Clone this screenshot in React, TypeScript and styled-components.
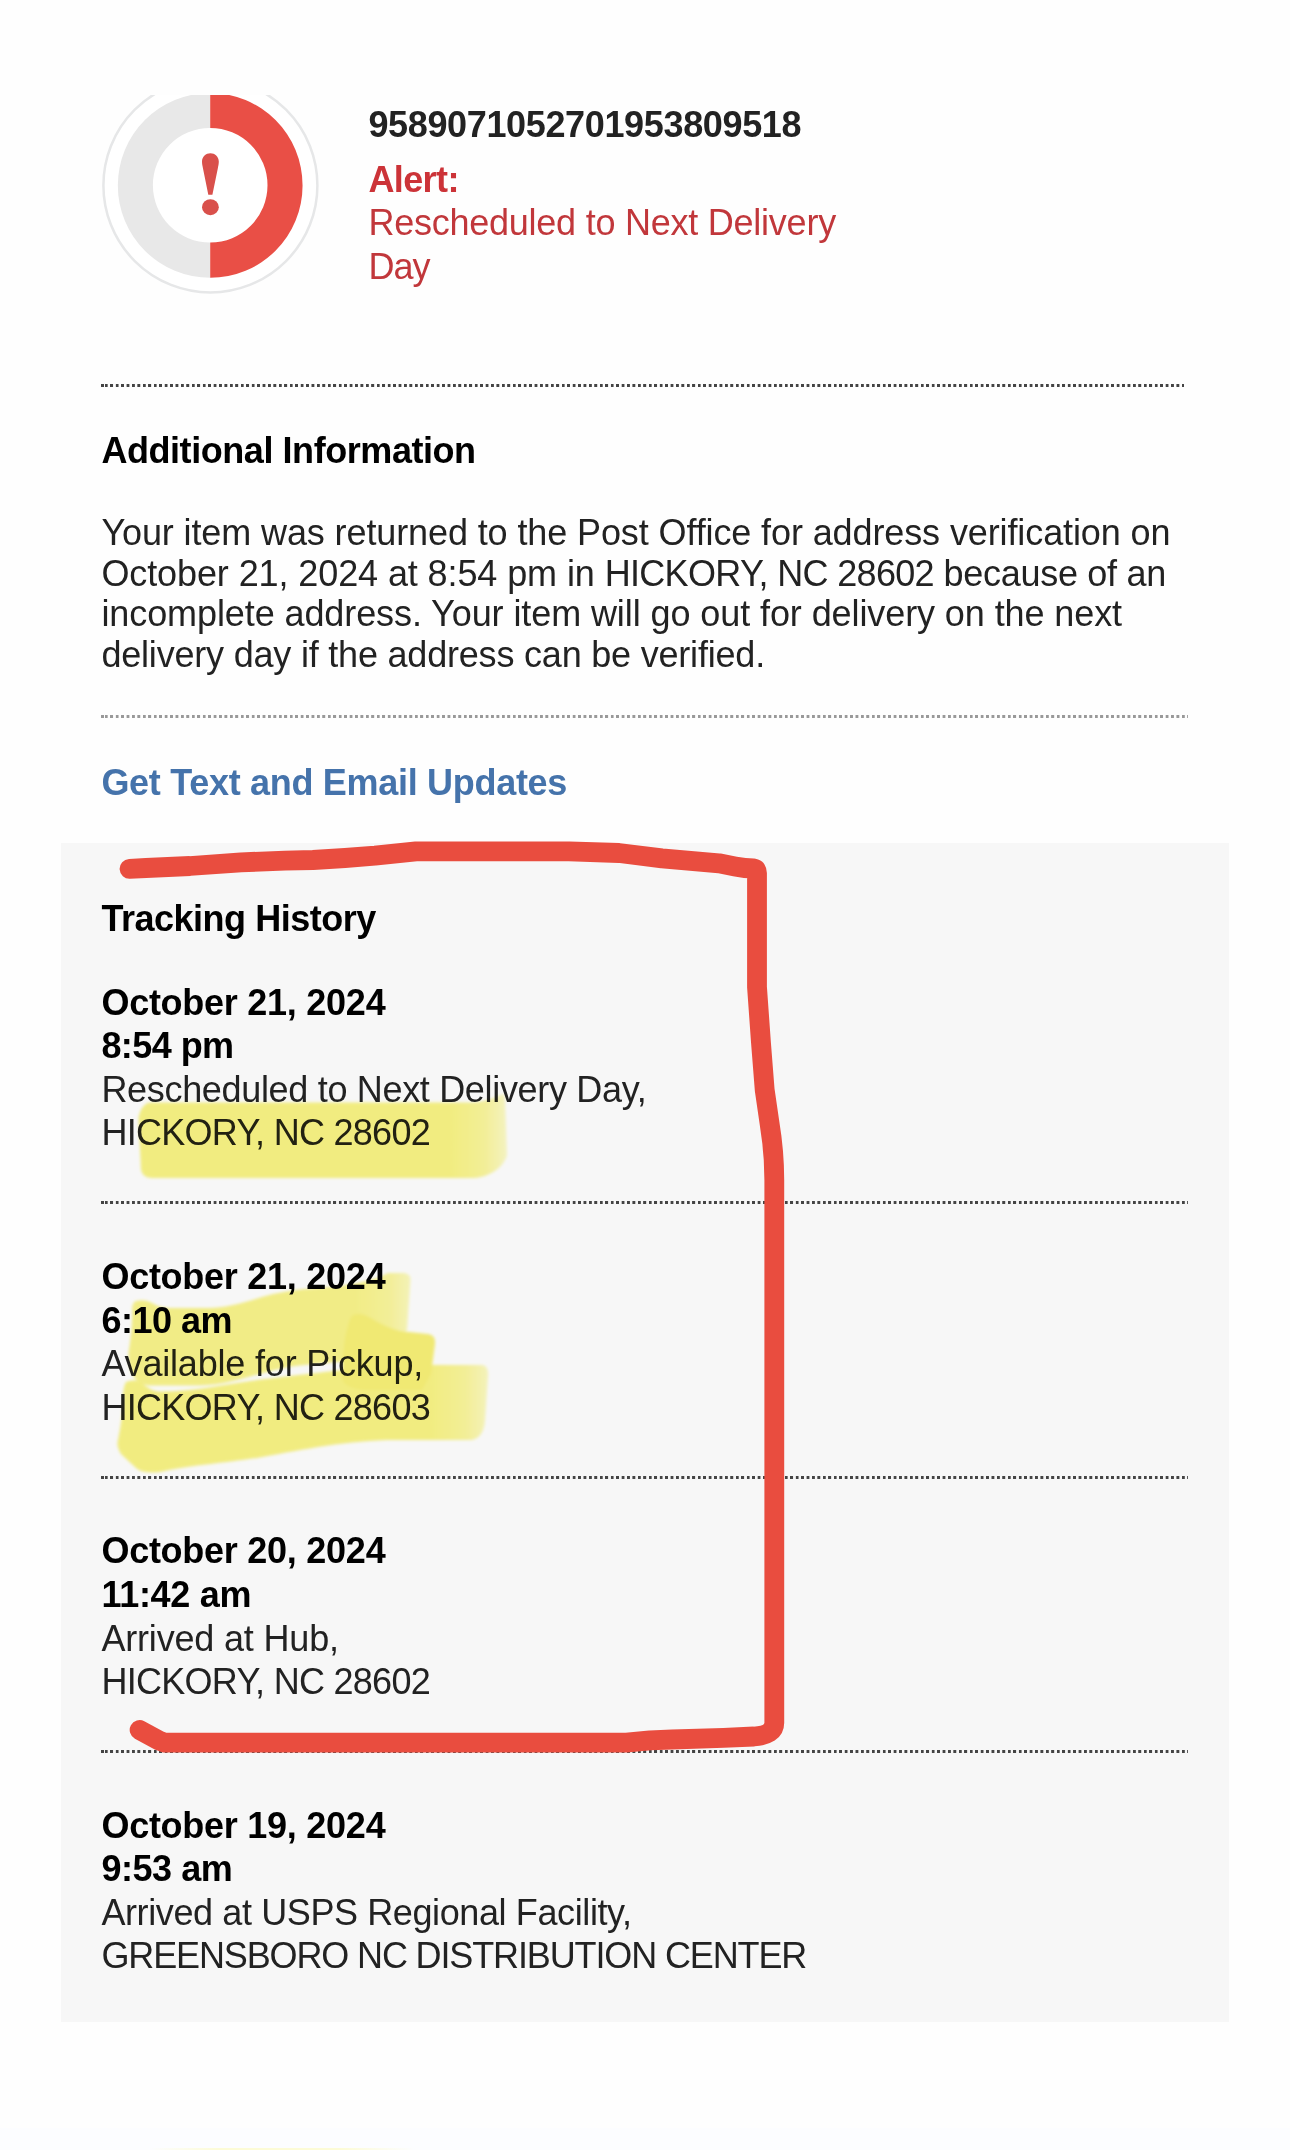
import React from 'react';
import styled, { createGlobalStyle } from 'styled-components';

const GlobalStyle = createGlobalStyle`
  body {
    margin: 0;
    background: #fefefe;
  }
`;

const Page = styled.main`
  position: relative;
  box-sizing: border-box;
  width: 1290px;
  height: 2150px;
  overflow: hidden;
  padding: 95px 61px 0;
  display: flex;
  flex-direction: column;
  background: #fefefe;
  color: #222;
  font-family: 'Liberation Sans', Arial, sans-serif;
  font-size: 36px;
  line-height: 43.55px;
`;

const Summary = styled.section`
  display: flex;
  gap: 49.4px;
  height: 288.7px;
  padding-left: 40px;
`;

const StatusIcon = styled.svg`
  flex: none;
  width: 218px;
  height: 200px;
`;

const SummaryText = styled.div`
  display: flex;
  flex-direction: column;
  padding-top: 8px;
`;

const Line = styled.div<{ $spacing: number }>`
  white-space: nowrap;
  letter-spacing: ${(p) => p.$spacing}px;
`;

const Run = styled.span<{ $spacing: number }>`
  letter-spacing: ${(p) => p.$spacing}px;
`;

const BoldLine = styled(Line)`
  font-weight: 700;
`;

const TrackingNumber = styled(BoldLine)`
  margin-bottom: 11.4px;
`;

const AlertText = styled.div`
  color: #c1373b;
`;

const AlertLabel = styled(BoldLine)`
  color: #cc3338;
`;

const DottedRule = styled.hr<{ $color?: string; $width?: number }>`
  flex: none;
  width: ${(p) => p.$width ?? 1087}px;
  height: 3px;
  margin: 0;
  border: 0;
  --dot: ${(p) => p.$color ?? '#444'};
  background:
    linear-gradient(var(--dot), var(--dot)) 0 0 / 3px 3px no-repeat,
    repeating-linear-gradient(
        90deg,
        var(--dot) 0 2.2px,
        transparent 3.1px 5px,
        var(--dot) 5.44px
      )
      4px 0 / 100% 3px no-repeat;
`;

const Section = styled.section`
  display: flex;
  flex-direction: column;
  padding-left: 40.4px;
`;

const Heading = styled.h2<{ $spacing: number; $color?: string }>`
  margin: 0;
  font-size: 36px;
  font-weight: 700;
  white-space: nowrap;
  letter-spacing: ${(p) => p.$spacing}px;
  color: ${(p) => p.$color ?? '#000'};
`;

const InfoBlock = styled.div`
  padding: 42.3px 0 39.05px;
`;

const Paragraph = styled.div`
  margin-top: 40.2px;
  line-height: 40.8px;
`;

const UpdatesLink = styled.div`
  padding: 42.6px 0 39.15px;
`;

const History = styled.section`
  box-sizing: border-box;
  width: 1168px;
  height: 1178.7px;
  padding: 54px 0 0 40.4px;
  background: #f7f7f7;
`;

const EventList = styled.div`
  display: flex;
  flex-direction: column;
  padding-top: 39.8px;
`;

const Event = styled.article`
  height: 174.2px;
`;

const EventRule = styled(DottedRule)`
  margin: 46.6px 0 50.65px;
`;

const When = styled.div`
  color: #000;
`;

const Overlay = styled.svg<{ $blend?: boolean }>`
  position: absolute;
  top: 0;
  left: 0;
  width: 1290px;
  height: 2150px;
  pointer-events: none;
  mix-blend-mode: ${(p) => (p.$blend ? 'multiply' : 'normal')};
`;

const Footer = styled.footer`
  position: absolute;
  left: 0;
  bottom: 0;
  width: 100%;
  height: 22px;
  background:
    linear-gradient(90deg, transparent 150px, #fcfbd6 220px 340px, transparent 415px) 0 100% / 100% 2px no-repeat,
    #fcfdff;
`;

type Text = [string, number];

const info: Text[][] = [
  [['Your item was returned to the Post Office for address verification on', -0.11]],
  [
    ['October 21, 2024 at 8:54 pm in ', -0.1],
    ['HICKORY, NC 28602', -0.68],
    [' because of an', -0.3],
  ],
  [['incomplete address. Your item will go out for delivery on the next', -0.09]],
  [['delivery day if the address can be verified.', -0.2]],
];

const events: { when: Text[]; what: Text[] }[] = [
  {
    when: [['October 21, 2024', -0.26], ['8:54 pm', -0.56]],
    what: [['Rescheduled to Next Delivery Day,', -0.32], ['HICKORY, NC 28602', -0.72]],
  },
  {
    when: [['October 21, 2024', -0.26], ['6:10 am', -0.5]],
    what: [['Available for Pickup,', -0.18], ['HICKORY, NC 28603', -0.72]],
  },
  {
    when: [['October 20, 2024', -0.26], ['11:42 am', -0.28]],
    what: [['Arrived at Hub,', -0.18], ['HICKORY, NC 28602', -0.72]],
  },
  {
    when: [['October 19, 2024', -0.26], ['9:53 am', -0.46]],
    what: [['Arrived at USPS Regional Facility,', -0.39], ['GREENSBORO NC DISTRIBUTION CENTER', -1.13]],
  },
];

function AlertIcon() {
  return (
    <StatusIcon viewBox="101 95 218 200">
      <circle cx="210.4" cy="185.4" r="107" fill="#fff" stroke="#e6e7e8" strokeWidth="2.5" />
      <path d="M210.2 93V128A57.3 57.3 0 0 0 210.2 242.6V277.8A92.4 92.4 0 0 1 210.2 93Z" fill="#e8e8e8" />
      <path d="M210.2 93V128A57.3 57.3 0 0 1 210.2 242.6V277.8A92.4 92.4 0 0 0 210.2 93Z" fill="#e94f46" />
      <path
        d="M210.4 153.2C206 153.2 202 156.6 202 161.6C202 164 202.5 166 203 168.5L208.3 194.7H212.4L217.8 168.5C218.3 166 218.8 164 218.8 161.6C218.8 156.6 214.8 153.2 210.4 153.2Z"
        fill="#d9504b"
      />
      <ellipse cx="210.4" cy="207.2" rx="8.4" ry="8" fill="#d9504b" />
    </StatusIcon>
  );
}

function Highlighter() {
  return (
    <Overlay $blend viewBox="0 0 1290 2150">
      <defs>
        <filter id="soft" x="-5%" y="-10%" width="110%" height="120%">
          <feGaussianBlur stdDeviation="1.8" />
        </filter>
        <linearGradient id="fadeA" gradientUnits="userSpaceOnUse" x1="450" y1="0" x2="508" y2="0">
          <stop offset="0" stopColor="#f9f484" />
          <stop offset="0.6" stopColor="#faf69c" />
          <stop offset="1" stopColor="#fcfac8" />
        </linearGradient>
        <linearGradient id="fadeB" gradientUnits="userSpaceOnUse" x1="355" y1="0" x2="412" y2="0">
          <stop offset="0" stopColor="#f9f48a" />
          <stop offset="0.6" stopColor="#faf69c" />
          <stop offset="1" stopColor="#fcfac0" />
        </linearGradient>
        <linearGradient id="fadeC" gradientUnits="userSpaceOnUse" x1="430" y1="0" x2="490" y2="0">
          <stop offset="0" stopColor="#f9f484" />
          <stop offset="0.6" stopColor="#faf69c" />
          <stop offset="1" stopColor="#fcfac4" />
        </linearGradient>
      </defs>
      <g filter="url(#soft)">
        <path
          d="M150 1102.5H470C485 1102 495 1098 503 1094Q505 1094 505 1100L507 1155C505 1164 494 1176 475 1178H152Q143 1178 141 1170L138.500 1118Q141 1104 150 1102.500Z"
          fill="url(#fadeA)"
        />
        <path
          d="M136 1301Q146 1299 152 1303Q160 1308 170 1308H210Q228 1308 262 1297Q285 1290 318 1288Q365 1285 388 1273H404Q411 1274 410.500 1280L407 1330L365 1361C345 1361 325 1363 300 1365.500C265 1369 235 1385 200 1385.500H148Q128 1382 128.500 1353Q133 1325 132 1308Q133 1302 136 1301Z"
          fill="url(#fadeB)"
        />
        <path
          d="M126 1382Q136 1378 142 1383Q149 1390 158 1391.500C195 1392 230 1383 270 1378.500C325 1372 375 1365 440 1365H482Q489 1366 488 1376L485 1420Q484 1437 472 1440H395C350 1440 300 1450 265 1456.500C235 1462 190 1465 160 1472Q143 1474 136 1468L121 1454Q116 1446 118 1440Q124 1410 123 1394Q124 1385 126 1382Z"
          fill="url(#fadeC)"
        />
        <path
          d="M353 1315Q361 1312 369 1317Q385 1327 400 1331L428 1334Q436 1335 435 1344L431 1374L422 1390H365Q343 1388 342 1378Q343 1340 348 1326Q350 1317 353 1315Z"
          fill="#f8f177"
        />
      </g>
    </Overlay>
  );
}

function RedMarker() {
  return (
    <Overlay viewBox="0 0 1290 2150">
      <path
        d="M129.500 868.800L146 868L190 866L241 862.300L285 860.600L313 860L345 858L375 855.700L416 851.300H569L619 853L662 858.300L719 863.300L735 866.500Q745 868.500 754 868.500Q757 869 757 873V987L761 1043L764.700 1090L769.500 1123Q774.300 1152 774.300 1180V1723Q774.300 1735 754 1736.500L723.500 1737.800L672 1739.500L650 1740.300L626.500 1742.700H164.800L159 1740.500L139.600 1730"
        fill="none"
        stroke="#e94d3f"
        strokeWidth="19.800"
        strokeLinecap="round"
        strokeLinejoin="round"
      />
    </Overlay>
  );
}

export default function App() {
  return (
    <Page>
      <GlobalStyle />
      <Summary>
        <AlertIcon />
        <SummaryText>
          <TrackingNumber $spacing={-0.35}>9589071052701953809518</TrackingNumber>
          <AlertText>
            <AlertLabel $spacing={-0.6}>Alert:</AlertLabel>
            <Line $spacing={-0.24}>Rescheduled to Next Delivery</Line>
            <Line $spacing={-0.9}>Day</Line>
          </AlertText>
        </SummaryText>
      </Summary>
      <Section>
        <DottedRule $width={1083} />
        <InfoBlock>
          <Heading $spacing={-0.44}>Additional Information</Heading>
          <Paragraph>
            {info.map((runs, i) => (
              <Line key={i} $spacing={0}>
                {runs.map(([text, spacing]) => (
                  <Run key={text} $spacing={spacing}>{text}</Run>
                ))}
              </Line>
            ))}
          </Paragraph>
        </InfoBlock>
        <DottedRule $color="#999" />
        <UpdatesLink>
          <Heading $spacing={-0.3} $color="#4573ab">Get Text and Email Updates</Heading>
        </UpdatesLink>
      </Section>
      <History>
        <Heading $spacing={-0.48}>Tracking History</Heading>
        <EventList>
          {events.map((event, i) => (
            <React.Fragment key={i}>
              {i > 0 && <EventRule />}
              <Event>
                <When>
                  {event.when.map(([text, spacing]) => (
                    <BoldLine key={text} $spacing={spacing}>{text}</BoldLine>
                  ))}
                </When>
                {event.what.map(([text, spacing]) => (
                  <Line key={text} $spacing={spacing}>{text}</Line>
                ))}
              </Event>
            </React.Fragment>
          ))}
        </EventList>
      </History>
      <Footer />
      <Highlighter />
      <RedMarker />
    </Page>
  );
}
